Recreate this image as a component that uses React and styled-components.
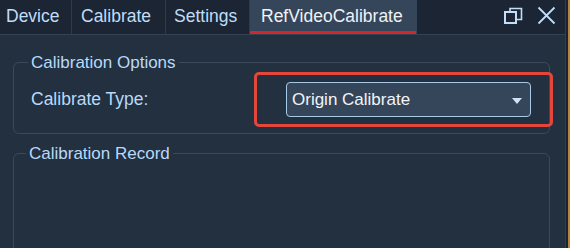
import React from "react";
import styled, { createGlobalStyle } from "styled-components";

const Global = createGlobalStyle`
  html, body { margin: 0; padding: 0; background: #223040; }
  body { font-family: "Liberation Sans", Arial, sans-serif; overflow: hidden; }
`;

const Frame = styled.div`
  display: flex;
  width: 570px;
  height: 248px;
  overflow: hidden;
  background: #223040;
`;

const Main = styled.div`
  width: 565px;
  display: flex;
  flex-direction: column;
  border-right: 1px solid #2f3d4f;
  overflow: hidden;
`;

const EdgeDark = styled.div`
  width: 2px;
  background: #1a2431;
`;

const EdgeOrange = styled.div`
  width: 2px;
  background: #b9843f;
`;

const TabBar = styled.div`
  display: flex;
  flex-shrink: 0;
  align-items: stretch;
  height: 34px;
  background: #1b2533;
  border-bottom: 1px solid #34414f;
`;

const Tab = styled.div`
  width: ${(p) => p.$w}px;
  display: flex;
  align-items: center;
  justify-content: flex-start;
  padding-left: ${(p) => p.$pl}px;
  font-size: 17.5px;
  color: ${(p) => (p.$active ? "#eef3f8" : "#c0ddf9")};
  background: ${(p) => (p.$active ? "#36465a" : "transparent")};
  border-right: 1px solid ${(p) => (p.$active ? "transparent" : "#2d3a4b")};
  box-shadow: ${(p) => (p.$active ? "inset 0 -3px 0 #d0282e" : "none")};
  padding-bottom: 2px;
  box-sizing: border-box;
  white-space: nowrap;
`;

const Spacer = styled.div`
  flex: ${(p) => (p.$w ? `0 0 ${p.$w}px` : "1")};
`;

const IconButton = styled.div`
  width: ${(p) => p.$w}px;
  display: flex;
  align-items: center;
  justify-content: center;
  padding-bottom: 4px;
  color: #c2def8;
`;

const Content = styled.div`
  flex-shrink: 0;
  padding: 18px 15px 0 13px;
  display: flex;
  flex-direction: column;
  gap: 10px;
`;

const Group = styled.fieldset`
  margin: 0;
  border: 1px solid #3a4a5d;
  border-radius: 6px;
  padding: 0 0 6px 17px;
  min-width: 0;
  height: ${(p) => (p.$grow ? "110px" : "auto")};
`;

const Legend = styled.legend`
  font-size: 17px;
  line-height: 19px;
  color: #b9d9f8;
  padding: 0 3px;
  margin-left: ${(p) => p.$ml}px;
`;

const Row = styled.div`
  display: flex;
  align-items: center;
`;

const Label = styled.div`
  flex: 0 0 223px;
  font-size: 17.5px;
  color: #b9d9f8;
`;

const Highlight = styled.div`
  flex: 0 0 299px;
  height: 55px;
  box-sizing: border-box;
  border: 3px solid #e5463b;
  border-radius: 5px;
  margin-right: -4px;
  display: flex;
  align-items: center;
  padding-left: 29px;
`;

const Combo = styled.div`
  width: 245px;
  height: 35px;
  box-sizing: border-box;
  background: #36465a;
  border: 1px solid #a8c8e8;
  border-radius: 4px;
  display: flex;
  align-items: center;
  justify-content: space-between;
  padding: 0 8px 0 5px;
  font-size: 17px;
  color: #f1f5f9;
`;

const Arrow = styled.span`
  width: 0;
  height: 0;
  border-left: 5.5px solid transparent;
  border-right: 5.5px solid transparent;
  border-top: 6px solid #cfe2f5;
  margin-top: 2px;
`;

export default function App() {
  return (
    <>
      <Global />
      <Frame>
        <Main>
          <TabBar>
            <Tab $w={72} $pl={6}>Device</Tab>
            <Tab $w={94} $pl={9}>Calibrate</Tab>
            <Tab $w={84} $pl={8}>Settings</Tab>
            <Tab $w={167} $pl={11} $active>RefVideoCalibrate</Tab>
            <Spacer />
            <IconButton $w={35}>
              <svg width="19" height="17" viewBox="0 0 19 17" fill="none" stroke="currentColor">
                <rect x="1" y="5" width="11" height="11" strokeWidth="2" />
                <path d="M6 4.5 V1.5 H17.5 V12.5 H13" strokeWidth="1.6" />
              </svg>
            </IconButton>
            <IconButton $w={31}>
              <svg width="19" height="19" viewBox="0 0 19 19" fill="none" stroke="currentColor" strokeWidth="1.8">
                <path d="M1.5 1.5 L17.5 17.5 M17.5 1.5 L1.5 17.5" />
              </svg>
            </IconButton>
            <Spacer $w={3} />
          </TabBar>
          <Content>
            <Group>
              <Legend $ml={-3}>Calibration Options</Legend>
              <Row>
                <Label>Calibrate Type:</Label>
                <Highlight>
                  <Combo>
                    <span>Origin Calibrate</span>
                    <Arrow />
                  </Combo>
                </Highlight>
              </Row>
            </Group>
            <Group $grow>
              <Legend $ml={-5}>Calibration Record</Legend>
            </Group>
          </Content>
        </Main>
        <EdgeDark />
        <EdgeOrange />
      </Frame>
    </>
  );
}
